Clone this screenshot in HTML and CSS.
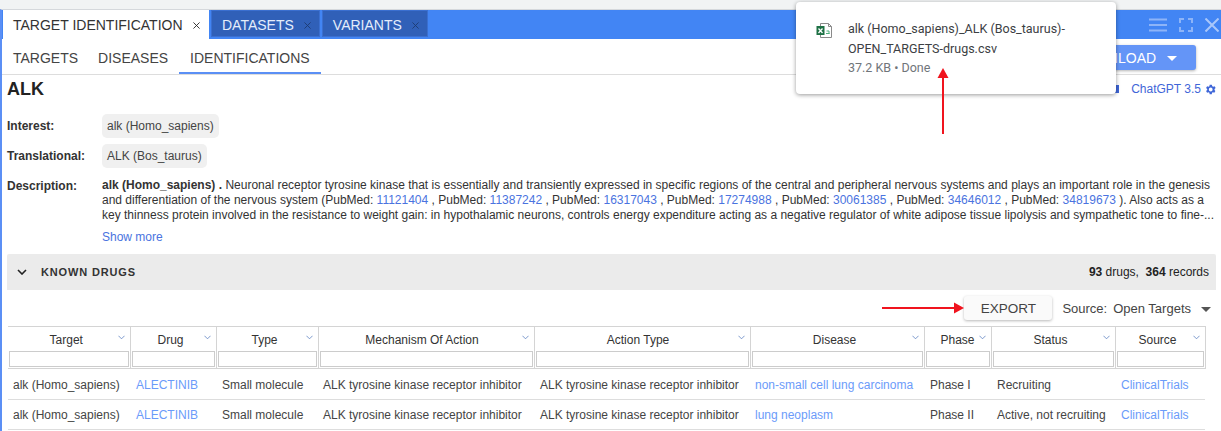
FILE: index.html
```html
<!DOCTYPE html>
<html lang="en">
<head>
  <meta charset="UTF-8" />
  <title>Target Identification</title>
  <link rel="stylesheet" href="styles.css">
</head>
<body>
  <div class="app">
    <div class="tabbar">
      <div class="tab tab-active">TARGET IDENTIFICATION<svg class="tab-x" viewBox="0 0 8 8"><path d="M.5.5l7 7M7.500.5l-7 7"/></svg></div>
      <div class="tab">DATASETS<svg class="tab-x" viewBox="0 0 8 8"><path d="M.5.5l7 7M7.500.5l-7 7"/></svg></div>
      <div class="tab">VARIANTS<svg class="tab-x" viewBox="0 0 8 8"><path d="M.5.5l7 7M7.500.5l-7 7"/></svg></div>
      <div class="window-btns">
        <svg width="18" height="14" viewBox="0 0 18 14"><path d="M0 1.500h18M0 7h18M0 12.500h18" stroke="#8db4f8" stroke-width="2"/></svg>
        <svg width="14" height="14" viewBox="0 0 14 14" fill="none"><path d="M1 5V1h4M9 1h4v4M13 9v4H9M5 13H1V9" stroke="#8db4f8" stroke-width="2"/></svg>
        <svg width="14" height="14" viewBox="0 0 14 14"><path d="M.5.5l13 13M13.500.5l-13 13" stroke="#a9c7fa" stroke-width="2"/></svg>
      </div>
    </div>

    <div class="subbar">
      <a class="subtab">TARGETS</a>
      <a class="subtab">DISEASES</a>
      <a class="subtab subtab-active">IDENTIFICATIONS</a>
      <button class="download">DOWNLOAD <span class="caret caret-white"></span></button>
    </div>

    <div class="title-row">
      <h1>ALK</h1>
      <div class="model">
        <span class="model-bit"></span>
        <span>ChatGPT 3.5</span>
        <svg width="13" height="13" viewBox="0 0 24 24"><path fill="#3f66d8" d="M19.400 13a7.500 7.500 0 0 0 0-2l2.100-1.600-2-3.500-2.500 1a7.500 7.500 0 0 0-1.700-1L14.400 3.200h-4l-.4 2.700a7.500 7.500 0 0 0-1.700 1l-2.500-1-2 3.500L5.900 11a7.500 7.500 0 0 0 0 2l-2.100 1.600 2 3.500 2.500-1a7.500 7.500 0 0 0 1.700 1l.4 2.700h4l.4-2.700a7.500 7.500 0 0 0 1.700-1l2.500 1 2-3.500zM12.400 15.500a3.500 3.500 0 1 1 0-7 3.500 3.500 0 0 1 0 7z"/></svg>
      </div>
    </div>

    <div class="info">
      <div class="info-row">
        <div class="info-label">Interest:</div>
        <div class="chip">alk (Homo_sapiens)</div>
      </div>
      <div class="info-row">
        <div class="info-label">Translational:</div>
        <div class="chip">ALK (Bos_taurus)</div>
      </div>
      <div class="info-row info-desc">
        <div class="info-label">Description:</div>
        <div class="desc">
          <p><b>alk (Homo_sapiens) .</b> Neuronal receptor tyrosine kinase that is essentially and transiently expressed in specific regions of the central and peripheral nervous systems and plays an important role in the genesis<br>
          and differentiation of the nervous system (PubMed: <a>11121404</a> , PubMed: <a>11387242</a> , PubMed: <a>16317043</a> , PubMed: <a>17274988</a> , PubMed: <a>30061385</a> , PubMed: <a>34646012</a> , PubMed: <a>34819673</a> ). Also acts as a<br>
          key thinness protein involved in the resistance to weight gain: in hypothalamic neurons, controls energy expenditure acting as a negative regulator of white adipose tissue lipolysis and sympathetic tone to fine-...</p>
          <a class="show-more">Show more</a>
        </div>
      </div>
    </div>

    <section class="panel">
      <div class="panel-head">
        <svg width="10" height="6" viewBox="0 0 10 6" fill="none"><path d="M1 1l4 4 4-4" stroke="#222" stroke-width="1.600"/></svg>
        <span class="panel-title">KNOWN DRUGS</span>
        <span class="panel-count"><b>93</b> drugs, &nbsp;<b>364</b> records</span>
      </div>
      <div class="panel-tools">
        <button class="export">EXPORT</button>
        <span class="source">Source:</span>
        <span class="source source-name">Open Targets</span>
        <span class="caret caret-dark"></span>
      </div>
      <table class="drugs">
        <thead>
          <tr>
            <th>Target<svg class="sort" viewBox="0 0 8 5"><path d="M.5.5L4 4 7.500.5"/></svg></th>
            <th>Drug<svg class="sort" viewBox="0 0 8 5"><path d="M.5.5L4 4 7.500.5"/></svg></th>
            <th>Type<svg class="sort" viewBox="0 0 8 5"><path d="M.5.5L4 4 7.500.5"/></svg></th>
            <th>Mechanism Of Action<svg class="sort" viewBox="0 0 8 5"><path d="M.5.5L4 4 7.500.5"/></svg></th>
            <th>Action Type<svg class="sort" viewBox="0 0 8 5"><path d="M.5.5L4 4 7.500.5"/></svg></th>
            <th>Disease<svg class="sort" viewBox="0 0 8 5"><path d="M.5.5L4 4 7.500.5"/></svg></th>
            <th>Phase<svg class="sort" viewBox="0 0 8 5"><path d="M.5.5L4 4 7.500.5"/></svg></th>
            <th>Status<svg class="sort" viewBox="0 0 8 5"><path d="M.5.5L4 4 7.500.5"/></svg></th>
            <th>Source<svg class="sort" viewBox="0 0 8 5"><path d="M.5.5L4 4 7.500.5"/></svg></th>
          </tr>
          <tr class="filters">
            <td><input type="text"></td><td><input type="text"></td><td><input type="text"></td>
            <td><input type="text"></td><td><input type="text"></td><td><input type="text"></td>
            <td><input type="text"></td><td><input type="text"></td><td><input type="text"></td>
          </tr>
        </thead>
        <tbody>
          <tr>
            <td>alk (Homo_sapiens)</td><td><a>ALECTINIB</a></td><td>Small molecule</td>
            <td>ALK tyrosine kinase receptor inhibitor</td><td>ALK tyrosine kinase receptor inhibitor</td>
            <td><a>non-small cell lung carcinoma</a></td><td>Phase I</td><td>Recruiting</td><td><a>ClinicalTrials</a></td>
          </tr>
          <tr>
            <td>alk (Homo_sapiens)</td><td><a>ALECTINIB</a></td><td>Small molecule</td>
            <td>ALK tyrosine kinase receptor inhibitor</td><td>ALK tyrosine kinase receptor inhibitor</td>
            <td><a>lung neoplasm</a></td><td>Phase II</td><td>Active, not recruiting</td><td><a>ClinicalTrials</a></td>
          </tr>
        </tbody>
      </table>
    </section>
  </div>

  <!-- chrome download bubble, sits on top of the page -->
  <div class="bubble">
    <svg class="xls" width="17" height="17" viewBox="0 0 17 17">
      <path d="M4.500 1.500h8l3 3v11h-11z" fill="#fff" stroke="#8a8a8a"/>
      <path d="M12.500 1.500v3h3" fill="none" stroke="#8a8a8a"/>
      <rect x="0.500" y="4" width="8" height="9" fill="#1e7145"/>
      <path d="M2.500 6.500l4 4.500M6.500 6.500l-4 4.500" stroke="#fff" stroke-width="1.300"/>
      <path d="M10 11.500h3.500M10.500 9h2.500v3" fill="none" stroke="#4caf7d"/>
    </svg>
    <div class="bubble-text">
      <div>alk (Homo_sapiens)_ALK (Bos_taurus)-</div>
      <div>OPEN_TARGETS-drugs.csv</div>
      <div class="bubble-meta">37.2 KB • Done</div>
    </div>
  </div>

  <svg class="arrow arrow-up" width="12" height="66" viewBox="0 0 12 66">
    <path d="M6 10V66" stroke="#f0141e" stroke-width="2"/>
    <path d="M6 0l5.500 10H.5z" fill="#f0141e"/>
  </svg>
  <svg class="arrow arrow-right" width="82" height="12" viewBox="0 0 82 12">
    <path d="M0 6H72" stroke="#f0141e" stroke-width="2"/>
    <path d="M82 6L72 .5v11z" fill="#f0141e"/>
  </svg>
</body>
</html>
```

FILE: styles.css
```css
* {
  box-sizing: border-box;
}

body {
  margin: 0;
  height: 431px;
  overflow: hidden;
  position: relative;
  background: #fff;
  font-family: 'Liberation Sans', Arial, sans-serif;
  font-size: 12px;
  color: #333;
}

.app {
  margin-top: 9px;
  border-top: 1px solid #d5d8dc;
  border-left: 2px solid #5b8ff5;
  height: 422px;
  overflow: hidden;
}

body::before {
  content: '';
  position: absolute;
  left: 0;
  top: 0;
  width: 100%;
  height: 9px;
  background: #f1f3f4;
}

/* top tabs */
.tabbar {
  height: 29px;
  background: #4285f4;
  display: flex;
  align-items: flex-start;
  padding-left: 1px;
  gap: 2px;
}

.tab {
  height: 27px;
  padding: 0 8px 0 10px;
  background: #3060b8;
  border: 1px solid #3a6fd0;
  color: #e4edfb;
  font-size: 14px;
  line-height: 28px;
  white-space: nowrap;
}

.tab-active {
  height: 29px;
  width: 206px;
  background: #fff;
  border: none;
  color: #333;
  line-height: 30px;
}

.tab-x {
  width: 7px;
  height: 7px;
  margin-left: 10px;
  vertical-align: 1px;
  fill: none;
  stroke: #1d3a70;
  stroke-width: 1;
}

.tab-active .tab-x {
  stroke: #222;
}

.window-btns {
  margin-left: auto;
  display: flex;
  align-items: center;
  gap: 12px;
  height: 29px;
  padding-right: 2px;
}

/* sub tabs */
.subbar {
  height: 36px;
  display: flex;
  align-items: flex-start;
  padding-left: 1px;
  border-bottom: 1px solid #ddd;
  position: relative;
}

.subtab {
  height: 35px;
  padding: 0 10px;
  font-size: 14px;
  line-height: 38px;
  color: #444;
  white-space: nowrap;
}

.subtab-active {
  border-bottom: 2px solid #5b8ff5;
  width: 142px;
  margin-left: 1px;
  padding: 0 11px;
}

.download {
  margin-left: auto;
  margin-right: 25px;
  margin-top: 6px;
  height: 25px;
  border: none;
  border-radius: 3px;
  background: #6495f7;
  color: #fff;
  font-family: inherit;
  font-size: 14px;
  white-space: nowrap;
  padding: 0 19px 0 12px;
  box-shadow: 0 1px 3px rgba(0, 0, 0, 0.3);
}

.caret {
  display: inline-block;
  width: 0;
  height: 0;
  border-left: 5px solid transparent;
  border-right: 5px solid transparent;
  vertical-align: middle;
}

.caret-white {
  border-top: 5px solid #fff;
  margin-left: 7px;
}

.caret-dark {
  border-top: 5px solid #555;
  margin-left: 10px;
  margin-top: 3px;
}

/* heading */
.title-row {
  display: flex;
  align-items: flex-start;
  justify-content: space-between;
  height: 39px;
  padding: 4px 4px 0 5px;
}

h1 {
  margin: 0;
  font-size: 18px;
  line-height: 20px;
  font-weight: bold;
  color: #222;
}

.model {
  display: flex;
  align-items: center;
  gap: 3px;
  height: 20px;
  color: #3f66d8;
}

.model-bit {
  width: 4px;
  height: 8px;
  background: #3f66d8;
  margin-right: 9px;
}

/* info rows */
.info {
  padding: 0 5px;
}

.info-row {
  display: flex;
  align-items: center;
  height: 24px;
  margin-bottom: 6px;
}

.info-label {
  width: 95px;
  font-weight: bold;
  color: #333;
}

.chip {
  height: 24px;
  line-height: 24px;
  padding: 0 5px;
  border-radius: 5px;
  background: #f0f0f0;
  color: #444;
}

.info-desc {
  align-items: flex-start;
  height: auto;
  margin-bottom: 0;
  padding-top: 3px;
}

.info-desc .info-label {
  line-height: 15px;
  padding-top: 2px;
}

.desc {
  flex: 1;
  line-height: 15px;
  white-space: nowrap;
}

.desc p {
  margin: 0;
  padding-top: 1px;
}

.desc a {
  color: #4a73e0;
}

.desc .show-more {
  display: block;
  margin-top: 7px;
  line-height: 15px;
}

/* known drugs */
.panel {
  margin: 9px 5px 0 5px;
}

.panel-head {
  height: 36px;
  background: #ebebeb;
  display: flex;
  align-items: center;
  padding: 0 7px 0 10px;
  border-radius: 2px 2px 0 0;
}

.panel-title {
  margin-left: 14px;
  font-weight: bold;
  font-size: 11px;
  letter-spacing: 0.85px;
  color: #333;
}

.panel-count {
  margin-left: auto;
  font-size: 12px;
  color: #222;
}

.panel-tools {
  height: 36px;
  display: flex;
  align-items: center;
  justify-content: flex-end;
  padding-right: 5px;
}

.export {
  width: 88px;
  height: 24px;
  border: none;
  border-radius: 3px;
  background: #fafafa;
  box-shadow: 0 1px 3px rgba(0, 0, 0, 0.28);
  font-family: inherit;
  font-size: 13.500px;
  color: #444;
  margin-right: 10px;
  padding: 0;
}

.source {
  font-size: 13px;
  color: #444;
}

.source-name {
  margin-left: 6px;
}

.drugs {
  table-layout: fixed;
  border-collapse: collapse;
  width: 1197px;
  margin-left: 1px;
  border-top: 1px solid #d4d4d4;
}

.drugs th:nth-child(1) { width: 122px; }
.drugs th:nth-child(2) { width: 86px; }
.drugs th:nth-child(3) { width: 102px; }
.drugs th:nth-child(4) { width: 216px; }
.drugs th:nth-child(5) { width: 216px; }
.drugs th:nth-child(6) { width: 174px; }
.drugs th:nth-child(7) { width: 67px; }
.drugs th:nth-child(8) { width: 124px; }
.drugs th:nth-child(9) { width: 90px; }

.drugs th {
  position: relative;
  height: 24px;
  padding: 2px 5px 0 0;
  font-weight: normal;
  color: #333;
  border-right: 1px solid #d4d4d4;
}

.drugs th:nth-child(4),
.drugs th:nth-child(5) {
  padding-right: 8px;
}

.drugs th:nth-child(7) {
  padding-right: 0;
}

.sort {
  position: absolute;
  right: 5px;
  top: 8px;
  width: 7px;
  height: 5px;
  fill: none;
  stroke: #5a7fc0;
  stroke-width: 0.9;
}

.filters td {
  height: 18px;
  padding: 0 1px;
  border-right: 1px solid #d4d4d4;
  border-bottom: 1px solid #d4d4d4;
}

.filters input {
  display: block;
  width: 100%;
  height: 16px;
  border: 1px solid #ccc;
  padding: 0;
  background: #fff;
}

.drugs tbody td {
  height: 30.500px;
  padding: 2px 0 0 6px;
  color: #444;
  white-space: nowrap;
  border-bottom: 1px solid #ddd;
}

.drugs tbody td:first-child,
.drugs tbody td:nth-child(4),
.drugs tbody td:nth-child(6) {
  padding-left: 5px;
}

.drugs a {
  color: #6b9bfa;
}

/* overlays */
.bubble {
  position: absolute;
  left: 796px;
  top: 2px;
  width: 320px;
  height: 92px;
  background: #fff;
  border-radius: 4px;
  box-shadow: 0 1px 4px rgba(0, 0, 0, 0.4);
  display: flex;
  padding: 17px 0 0 20px;
  font-family: Roboto, sans-serif;
  font-size: 12.500px;
  line-height: 19.500px;
  color: #3c4043;
}

.xls {
  flex: none;
  margin-top: 3px;
}

.bubble-text {
  margin-left: 15px;
}

.bubble-meta {
  color: #70757a;
}

.arrow {
  position: absolute;
}

.arrow-up {
  left: 937px;
  top: 68px;
}

.arrow-right {
  left: 882px;
  top: 302px;
}
```
